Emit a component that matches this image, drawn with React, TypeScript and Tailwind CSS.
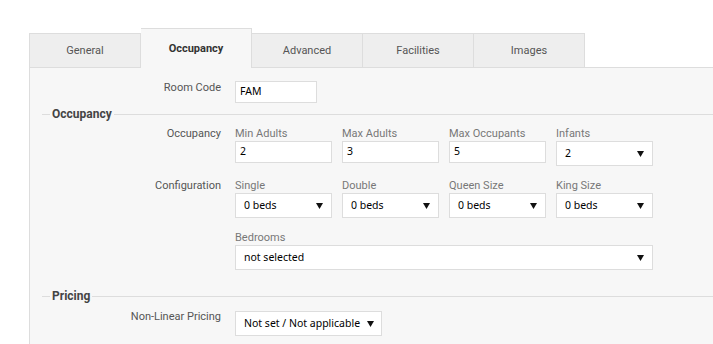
import React from "react";

const roboto = { fontFamily: "Roboto, 'Liberation Sans', sans-serif" };
const valFont = { fontFamily: "'Noto Sans', 'Liberation Sans', sans-serif" };

function Arrow() {
  return (
    <svg width="7" height="7" viewBox="0 0 7 7" className="shrink-0">
      <polygon points="0,1 7,1 3.5,7" fill="#111" />
    </svg>
  );
}

function TextInput({ value, className }: { value: string; className?: string }) {
  return (
    <div
      className={`h-[22px] border border-[#dddddd] bg-white pl-[4px] flex items-center text-[10.5px] text-black ${className ?? ""}`}
      style={valFont}
    >
      {value}
    </div>
  );
}

function Select({ value, className }: { value: string; className?: string }) {
  return (
    <div
      className={`h-[25px] border border-[#dddddd] bg-white pl-[8px] flex items-center justify-between whitespace-nowrap text-[10.5px] text-black ${className ?? "pr-[8px] gap-[9px]"}`}
      style={valFont}
    >
      <span>{value}</span>
      <Arrow />
    </div>
  );
}

function SubLabel({ children }: { children: React.ReactNode }) {
  return <div className="h-[14px] leading-[14px] text-[11px] text-[#777]">{children}</div>;
}

function Legend({ children }: { children: React.ReactNode }) {
  return (
    <div className="h-[16px] flex items-center ml-[12px]">
      <div className="w-[8px] h-px bg-[#dddddd]" />
      <div className="px-[2px] text-[12px] font-bold text-[#444] leading-[16px]">{children}</div>
      <div className="flex-1 h-px bg-[#dddddd]" />
    </div>
  );
}

function Row({ label, children, className }: { label: string; children: React.ReactNode; className?: string }) {
  return (
    <div className={`flex items-start ${className ?? ""}`}>
      <div className="w-[191px] shrink-0 text-right text-[11px] leading-[14px] text-[#555]">{label}</div>
      <div className="ml-[14px]">{children}</div>
    </div>
  );
}

const tabs = ["General", "Occupancy", "Advanced", "Facilities", "Images"];

export default function App() {
  return (
    <div className="w-[713px] h-[344px] overflow-hidden bg-white flex flex-col pt-[28px] pl-[29px]" style={roboto}>
      <div className="flex items-end h-[39px]">
        {tabs.map((t, i) => {
          const active = t === "Occupancy";
          return (
            <div
              key={t}
              className={
                active
                  ? "w-[111px] h-[40px] -mb-px pt-[1px] relative z-10 bg-[#f7f7f7] border-t border-r border-[#dddddd] flex items-center justify-center text-[11px] font-bold text-[#333]"
                  : `${i === 0 ? "w-[112px] border-l" : "w-[111px]"} h-[34px] pt-[2px] bg-[#eeeeee] border-t border-r border-[#dddddd] flex items-center justify-center text-[11px] text-[#555]`
              }
            >
              {t}
            </div>
          );
        })}
      </div>
      <div className="flex-1 bg-[#f7f7f7] border-l border-t border-[#dddddd] pt-[13px]">
        <Row label="Room Code">
          <TextInput value="FAM" className="w-[82px]" />
        </Row>

        <div className="mt-[3px]">
          <Legend>Occupancy</Legend>
        </div>

        <Row label="Occupancy" className="mt-[5px]">
          <div className="flex gap-[10px]">
            <div className="w-[97px]">
              <SubLabel>Min Adults</SubLabel>
              <TextInput value="2" />
            </div>
            <div className="w-[97px]">
              <SubLabel>Max Adults</SubLabel>
              <TextInput value="3" />
            </div>
            <div className="w-[97px]">
              <SubLabel>Max Occupants</SubLabel>
              <TextInput value="5" />
            </div>
            <div className="w-[97px]">
              <SubLabel>Infants</SubLabel>
              <Select value="2" />
            </div>
          </div>
        </Row>

        <Row label="Configuration" className="mt-[13px]">
          <div className="flex gap-[10px]">
            {["Single", "Double", "Queen Size", "King Size"].map((l) => (
              <div key={l} className="w-[97px]">
                <SubLabel>{l}</SubLabel>
                <Select value="0 beds" />
              </div>
            ))}
          </div>
        </Row>

        <Row label="" className="mt-[13px]">
          <div className="w-[418px]">
            <SubLabel>Bedrooms</SubLabel>
            <Select value="not selected" />
          </div>
        </Row>

        <div className="mt-[18px]">
          <Legend>Pricing</Legend>
        </div>

        <Row label="Non-Linear Pricing" className="mt-[6px]">
          <div className="pt-[1px]">
            <Select value="Not set / Not applicable" className="w-[147px] pr-[7px] gap-[6px]" />
          </div>
        </Row>
      </div>
    </div>
  );
}
